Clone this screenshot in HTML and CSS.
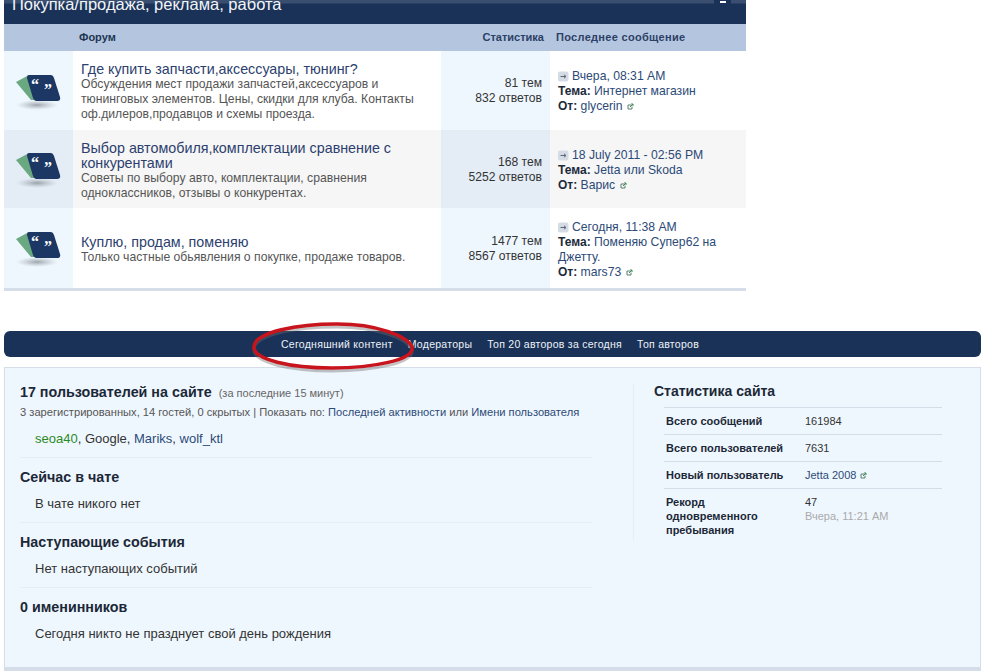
FILE: index.html
```html
<!DOCTYPE html>
<html lang="ru">
<head>
<meta charset="utf-8">
<title>Форум</title>
<link rel="stylesheet" href="styles.css">
</head>
<body>
<svg class="defs" width="0" height="0" aria-hidden="true">
  <defs>
    <radialGradient id="shade"><stop offset="0" stop-color="#7a8188" stop-opacity=".7"/><stop offset="1" stop-color="#a0a6ac" stop-opacity="0"/></radialGradient>
    <symbol id="forum-icon" viewBox="0 0 50 46">
      <ellipse cx="23" cy="37" rx="21" ry="5" fill="url(#shade)"/>
      <path d="M2 14 L15 7 L22 32 L17 32 Z" fill="#6aa882"/>
      <path d="M15 7 H37 Q39 7 40 10 L46 29 Q47 33 43 33 H22 Q20 33 19 30 L13 10 Q13 7 15 7 Z" fill="#1c3763"/>
      <text x="17" y="21.500" class="quote">“</text>
      <text x="30" y="26.500" class="quote">”</text>
    </symbol>
    <symbol id="go-icon" viewBox="0 0 11 11">
      <rect x="0" y="0.5" width="10.500" height="10" rx="2" fill="#d5dbe4"/>
      <path d="M2.500 5.500 H8 M6 3.800 L8 5.500 L6 7.200" fill="none" stroke="#5d6878" stroke-width="1"/>
    </symbol>
    <symbol id="ext-icon" viewBox="0 0 7 7">
      <path d="M1 2 H4 M1 2 V6 H5 V3.500" fill="none" stroke="#5d7f6a" stroke-width="1"/>
      <path d="M3 4 L6 1 M4 1 H6 V3" fill="none" stroke="#3f8a5a" stroke-width="1"/>
    </symbol>
  </defs>
</svg>

<main class="page">
  <section class="forum">
    <div class="forum-title">
      <h2 class="forum-title-text">Покупка/продажа, реклама, работа</h2>
      <span class="collapse"><span class="collapse-dash"></span></span>
    </div>
    <div class="forum-head">
      <span class="head-forum">Форум</span>
      <span class="head-stats">Статистика</span>
      <span class="head-last">Последнее сообщение</span>
    </div>

    <div class="row row-a">
      <div class="c-icon"><svg class="ficon"><use href="#forum-icon"/></svg></div>
      <div class="c-main">
        <a class="f-title">Где купить запчасти,аксессуары, тюнинг?</a>
        <p class="f-desc">Обсуждения мест продажи запчастей,аксессуаров и тюнинговых элементов. Цены, скидки для клуба. Контакты оф.дилеров,продавцов и схемы проезда.</p>
      </div>
      <div class="c-stats">81 тем<br>832 ответов</div>
      <div class="c-last">
        <svg class="go"><use href="#go-icon"/></svg><a>Вчера, 08:31 AM</a><br>
        <b>Тема:</b> <a>Интернет магазин</a><br>
        <b>От:</b> <a>glycerin</a> <svg class="ext"><use href="#ext-icon"/></svg>
      </div>
    </div>

    <div class="row row-b">
      <div class="c-icon"><svg class="ficon"><use href="#forum-icon"/></svg></div>
      <div class="c-main">
        <a class="f-title">Выбор автомобиля,комплектации сравнение с конкурентами</a>
        <p class="f-desc">Советы по выбору авто, комплектации, сравнения одноклассников, отзывы о конкурентах.</p>
      </div>
      <div class="c-stats">168 тем<br>5252 ответов</div>
      <div class="c-last">
        <svg class="go"><use href="#go-icon"/></svg><a>18 July 2011 - 02:56 PM</a><br>
        <b>Тема:</b> <a>Jetta или Skoda</a><br>
        <b>От:</b> <a>Варис</a> <svg class="ext"><use href="#ext-icon"/></svg>
      </div>
    </div>

    <div class="row row-c">
      <div class="c-icon"><svg class="ficon"><use href="#forum-icon"/></svg></div>
      <div class="c-main">
        <a class="f-title">Куплю, продам, поменяю</a>
        <p class="f-desc">Только частные обьявления о покупке, продаже товаров.</p>
      </div>
      <div class="c-stats">1477 тем<br>8567 ответов</div>
      <div class="c-last">
        <svg class="go"><use href="#go-icon"/></svg><a>Сегодня, 11:38 AM</a><br>
        <b>Тема:</b> <a>Поменяю Супер62 на Джетту.</a><br>
        <b>От:</b> <a>mars73</a> <svg class="ext"><use href="#ext-icon"/></svg>
      </div>
    </div>
  </section>

  <nav class="bar">
    <a>Сегодняшний контент</a>
    <a>Модераторы</a>
    <a>Топ 20 авторов за сегодня</a>
    <a>Топ авторов</a>
    <svg class="ring" viewBox="0 0 172 50" width="172" height="50" aria-hidden="true">
      <path class="ring-shadow" d="M7 27 C9 12 50 5 90 5 C130 5 160 16 165 28 C168 41 125 49 85 49 C45 49 5 41 7 27 Z"/>
      <path class="ring-line" d="M7 24 C9 10 50 2 90 2 C130 2 160 14 165 25 C168 38 125 46 85 46 C45 46 5 38 7 24 Z"/>
    </svg>
  </nav>

  <section class="board">
    <div class="board-left">
      <div class="block block-first">
        <h4 class="block-h">17 пользователей на сайте <span class="block-note">(за последние 15 минут)</span></h4>
        <p class="block-sub">3 зарегистрированных, 14 гостей, 0 скрытых | Показать по: <a>Последней активности</a> или <a>Имени пользователя</a></p>
        <p class="block-text"><a class="green">seoa40</a>, Google, <a>Mariks</a>, <a>wolf_ktl</a></p>
      </div>
      <div class="block">
        <h4 class="block-h">Сейчас в чате</h4>
        <p class="block-text">В чате никого нет</p>
      </div>
      <div class="block">
        <h4 class="block-h">Наступающие события</h4>
        <p class="block-text">Нет наступающих событий</p>
      </div>
      <div class="block block-last">
        <h4 class="block-h">0 именинников</h4>
        <p class="block-text">Сегодня никто не празднует свой день рождения</p>
      </div>
    </div>
    <aside class="board-right">
      <h4 class="stats-h">Статистика сайта</h4>
      <dl class="stats">
        <div class="stat"><dt>Всего сообщений</dt><dd>161984</dd></div>
        <div class="stat"><dt>Всего пользователей</dt><dd>7631</dd></div>
        <div class="stat"><dt>Новый пользователь</dt><dd><a>Jetta 2008</a> <svg class="ext"><use href="#ext-icon"/></svg></dd></div>
        <div class="stat stat-tall"><dt>Рекорд одновременного пребывания</dt><dd>47<br><span class="muted">Вчера, 11:21 AM</span></dd></div>
      </dl>
    </aside>
  </section>
</main>
</body>
</html>
```

FILE: styles.css
```css
* { box-sizing: border-box; }
html, body { margin: 0; padding: 0; background: #fff; }
body { font-family: "Liberation Sans", Arial, sans-serif; font-size: 12px; color: #1c2837; overflow: hidden; height: 671px; }
a { color: #2c4a78; }
p, h2, h4, dl, dd { margin: 0; font-weight: normal; }
.defs { position: absolute; }
.quote { font: bold 16px "Liberation Serif", serif; fill: #fff; }

.page { padding: 0 3px 0 4px; }

.forum { width: 742px; border-bottom: 3px solid #d5dde8; }
.forum-title { height: 24px; background: linear-gradient(#3a4f70 0, #3a4f70 3px, #1a3258 4px); display: flex; justify-content: space-between; color: #fff; overflow: hidden; }
.forum-title-text { font-size: 16.500px; line-height: 18px; margin: -5px 0 0 8px; color: #f2f5f9; }
.collapse { width: 17px; height: 5px; margin-right: 15px; background: #1a3258; display: flex; justify-content: center; }
.collapse-dash { width: 6px; height: 2px; margin-top: 1px; background: #fff; }

.forum-head { height: 27px; background: #b4c6df; display: flex; align-items: center; font-size: 11px; font-weight: bold; color: #1d3652; padding-bottom: 2px; }
.head-forum { width: 437px; padding-left: 75px; }
.head-stats { width: 103px; text-align: right; color: #2c4066; }
.head-last { padding-left: 12px; letter-spacing: .3px; color: #2c4066; }

.row { display: flex; line-height: 15px; }
.row-a { height: 79px; }
.row-b { height: 78px; }
.row-c { height: 80px; }
.row > div { display: flex; }
.c-icon { width: 69px; background: #eff7fe; align-items: center; padding-left: 10px; }
.c-main { width: 368px; flex-direction: column; justify-content: center; padding: 0 20px 0 8px; background: #fff; }
.row-a .c-main { padding-top: 2px; }
.row-b .c-main, .row-c .c-main { padding-top: 4px; }
.row > .c-stats, .row > .c-last { display: block; }
.c-stats { width: 109px; background: #eff7fe; text-align: right; padding-right: 8px; color: #333; font-size: 12.100px; }
.c-last { width: 196px; padding: 0 16px 0 8px; background: #fff; color: #333; font-size: 12.200px; }
.row-b .c-icon, .row-b .c-stats { background: #e4edf6; }
.row-b .c-main, .row-b .c-last { background: #f6f6f6; }
.row-a .c-stats, .row-b .c-stats { padding-top: 25px; }
.row-c .c-stats { padding-top: 26px; }
.row-a .c-last, .row-b .c-last { padding-top: 18px; }
.row-c .c-last { padding-top: 12px; }
.c-last b { color: #1d2a3a; font-size: 12px; }

.ficon { width: 50px; height: 46px; }
.f-title { font-size: 14.300px; line-height: 15px; color: #2c3f6e; }
.f-desc { color: #555; line-height: 15px; font-size: 12.200px; }
.go { width: 11px; height: 11px; margin-right: 3px; vertical-align: -2px; }
.ext { width: 7px; height: 7px; margin-left: 1px; }

.bar { position: relative; margin-top: 40px; height: 26px; width: 977px; background: #1a3258; border-radius: 6px; display: flex; justify-content: center; align-items: center; gap: 15px; font-size: 10.500px; letter-spacing: .27px; padding-right: 5px; }
.bar a { color: #eef2f7; }
.ring { position: absolute; left: 243px; top: -9px; overflow: visible; }
.ring-line, .ring-shadow { fill: none; }
.ring-line { stroke: #c8141c; stroke-width: 3.500px; }
.ring-shadow { stroke: #6b6b6b; stroke-width: 3px; opacity: .4; }

.board { margin-top: 10px; width: 977px; height: 304px; background: #eff7fe; border: 1px solid #d5dde8; border-bottom: 4px solid #d5dde8; display: flex; padding: 15px 0 0 15px; }
.board-left { width: 572px; }
.block { padding: 0 0 10px; border-bottom: 1px solid #e6edf4; margin-bottom: 10px; }
.block-last { border: 0; }
.block-h { font-size: 14.300px; font-weight: bold; line-height: 18px; color: #1c2837; }
.block-note { font-size: 11px; font-weight: normal; color: #666; margin-left: 3px; }
.block-sub { font-size: 11.150px; line-height: 14px; margin-top: 3px; color: #555; }
.block-sub a { color: #2c4a78; }
.block-text { font-size: 13px; line-height: 16px; margin: 10px 0 0 15px; color: #333; }
.block-first .block-text { margin-top: 12px; }
.green { color: #2b8a1f; }

.board-right { margin: 0 0 0 41px; width: 309px; height: 158px; border-left: 1px solid #e6edf4; padding-left: 20px; }
.stats-h { font-size: 14px; font-weight: bold; line-height: 18px; margin-top: -1px; color: #1c2837; }
.stats { margin: 7px 0 0 10px; width: 278px; border-top: 1px solid #d5dde8; font-size: 11px; line-height: 14px; }
.stat { height: 27px; display: flex; align-items: center; border-bottom: 1px solid #d5dde8; padding-left: 2px; }
.stat dt { width: 139px; font-weight: bold; color: #1c2837; }
.stat dd { color: #333; }
.stat-tall { height: auto; border: 0; align-items: flex-start; padding-top: 6px; }
.stat-tall dt { padding-right: 30px; }
.muted { color: #aaa; }
```
